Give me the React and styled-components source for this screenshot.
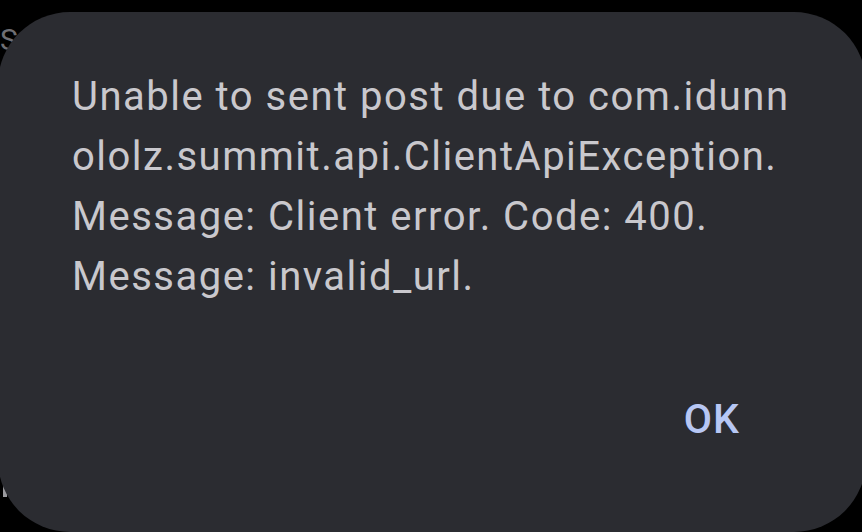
import React from 'react'
import styled, { createGlobalStyle } from 'styled-components'

const GlobalStyle = createGlobalStyle`
html, body {
    margin: 0;
    padding: 0;
    background: #000;
}
body {
    font-family: Roboto, "Noto Sans", "Liberation Sans", sans-serif;
}
`

export const Screen = styled.div`
position: relative;
width: 862px;
height: 532px;
overflow: hidden;
background: #000;
`

export const BehindText = styled.span`
position: absolute;
left: 0;
top: 22px;
font-size: 30px;
color: #6f6f74;
`

export const BehindBar = styled.div`
position: absolute;
left: 3px;
top: 476px;
width: 4px;
height: 21px;
background: #9a9a9e;
`

export const Dialog = styled.div`
position: absolute;
left: -2px;
top: 12px;
width: 868px;
height: 520px;
box-sizing: border-box;
border-radius: 72px;
background: #2b2c31;
padding: 55px 0 0 74px;
display: flex;
flex-direction: column;
`

export const Message = styled.p`
margin: 0;
font-size: 40px;
line-height: 60px;
color: #c9c8cd;
letter-spacing: 1.5px;
span {
    display: block;
    white-space: nowrap;
}
`

export const Actions = styled.div`
display: flex;
justify-content: flex-end;
padding-right: 126px;
margin-top: 82px;
`

export const TextButton = styled.button`
background: none;
border: none;
padding: 0;
font-family: inherit;
font-size: 41px;
font-weight: 500;
line-height: 60px;
letter-spacing: 1px;
color: #b7c7f4;
cursor: pointer;
`

const lines = [
    "Unable to sent post due to com.idunn",
    "ololz.summit.api.ClientApiException.",
    "Message: Client error. Code: 400.",
    "Message: invalid_url.",
]

export default function App() {
    return (
        <Screen>
            <GlobalStyle />
            <BehindText>S</BehindText>
            <BehindBar />
            <Dialog>
                <Message>
                    {lines.map((l) => <span key={l}>{l}</span>)}
                </Message>
                <Actions>
                    <TextButton>OK</TextButton>
                </Actions>
            </Dialog>
        </Screen>
    )
}
